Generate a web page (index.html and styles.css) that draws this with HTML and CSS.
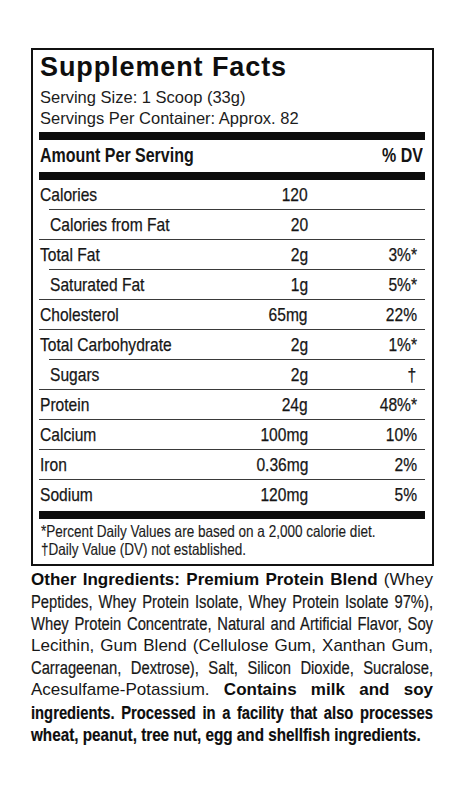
FILE: index.html
```html
<!DOCTYPE html>
<html lang="en">
<head>
<meta charset="utf-8">
<title>Supplement Facts</title>
<link rel="stylesheet" href="styles.css">
</head>
<body>
<div class="label">
  <section class="facts">
    <h1 class="title">Supplement Facts</h1>
    <p class="serving">Serving Size: 1 Scoop (33g)</p>
    <p class="serving">Servings Per Container: Approx. 82</p>
    <div class="bar"></div>
    <div class="head-row"><span class="cn left">Amount Per Serving</span><span class="cn right">% DV</span></div>
    <div class="bar"></div>
    <div class="rows">
      <div class="row first"><span class="name">Calories</span><span class="amt">120</span><span class="dv"></span></div>
      <div class="row sub"><span class="name">Calories from Fat</span><span class="amt">20</span><span class="dv"></span></div>
      <div class="row"><span class="name">Total Fat</span><span class="amt">2g</span><span class="dv">3%*</span></div>
      <div class="row sub"><span class="name">Saturated Fat</span><span class="amt">1g</span><span class="dv">5%*</span></div>
      <div class="row"><span class="name">Cholesterol</span><span class="amt">65mg</span><span class="dv">22%</span></div>
      <div class="row"><span class="name">Total Carbohydrate</span><span class="amt">2g</span><span class="dv">1%*</span></div>
      <div class="row sub"><span class="name">Sugars</span><span class="amt">2g</span><span class="dv dagger">†</span></div>
      <div class="row"><span class="name">Protein</span><span class="amt">24g</span><span class="dv">48%*</span></div>
      <div class="row"><span class="name">Calcium</span><span class="amt">100mg</span><span class="dv">10%</span></div>
      <div class="row"><span class="name">Iron</span><span class="amt">0.36mg</span><span class="dv">2%</span></div>
      <div class="row last"><span class="name">Sodium</span><span class="amt">120mg</span><span class="dv">5%</span></div>
    </div>
    <div class="bar"></div>
    <p class="note">
      <span class="nl">*Percent Daily Values are based on a 2,000 calorie diet.</span>
      <span class="nl">†Daily Value (DV) not established.</span>
    </p>
  </section>
  <p class="ingredients">
    <span class="ln wide"><b>Other Ingredients: Premium Protein Blend</b> (Whey</span>
    <span class="ln narrow">Peptides, Whey Protein Isolate, Whey Protein Isolate 97%),</span>
    <span class="ln narrow">Whey Protein Concentrate, Natural and Artificial Flavor, Soy</span>
    <span class="ln wide">Lecithin, Gum Blend (Cellulose Gum, Xanthan Gum,</span>
    <span class="ln narrow">Carrageenan, Dextrose), Salt, Silicon Dioxide, Sucralose,</span>
    <span class="ln wide">Acesulfame-Potassium. <b>Contains milk and soy</b></span>
    <span class="ln narrow"><b>ingredients. Processed in a facility that also processes</b></span>
    <span class="ln narrow end"><b>wheat, peanut, tree nut, egg and shellfish ingredients.</b></span>
  </p>
</div>
</body>
</html>
```

FILE: styles.css
```css
* {
  box-sizing: border-box;
}

html, body {
  margin: 0;
  padding: 0;
  background: #ffffff;
}

body {
  padding-top: 48px;
  color: #121212;
  font-family: "Liberation Sans", Arial, sans-serif;
  overflow: hidden;
}

.label {
  margin-left: 31px;
  width: 403px;
}

.facts {
  border: 2px solid #111111;
  padding: 2px 7px 6px 6px;
}

.title {
  margin: 0 0 4px 1px;
  font-weight: bold;
  font-size: 27px;
  line-height: 31px;
  letter-spacing: 0.9px;
  color: #0e0e0e;
}

.serving {
  margin: 0 0 0 1px;
  font-size: 16.5px;
  line-height: 20.5px;
  color: #1c1c1c;
}

.bar {
  height: 8px;
  background: #0c0c0c;
}

.serving + .serving + .bar {
  margin-top: 4px;
}

/* condensed type: Liberation Sans squeezed to Arial Narrow proportions */
.cn,
.name,
.amt,
.dv,
.nl {
  display: inline-block;
  transform: scaleX(0.82);
}

.left,
.name,
.nl {
  transform-origin: left center;
}

.right,
.amt,
.dv {
  transform-origin: right center;
}

.head-row {
  display: flex;
  justify-content: space-between;
  padding: 0 2px 1px 1px;
  font-weight: bold;
  font-size: 19.5px;
  line-height: 31px;
  color: #141414;
}

.rows {
  font-size: 19px;
  -webkit-text-stroke: 0.25px #161616;
}

.row {
  display: grid;
  grid-template-columns: 1fr auto 109px;
  padding: 0 8px 0 1px;
  height: 30px;
  line-height: 29px;
  border-top: 1px solid #3a3a3a;
  color: #161616;
}

.row.first {
  border-top: 0;
  height: 29px;
}

.row.sub {
  margin-left: 10px;
}

.row.last {
  height: 32px;
}

.amt,
.dv {
  text-align: right;
}

.dagger {
  padding-right: 1px;
}

.note {
  margin: 0;
  padding: 3px 0 0 2px;
  font-size: 16.5px;
  line-height: 18px;
  color: #1c1c1c;
  -webkit-text-stroke: 0.15px #1c1c1c;
}

.nl {
  display: block;
  white-space: nowrap;
}

.ingredients {
  margin: 3px 1px 0 0;
  line-height: 22.1px;
  color: #171717;
}

.ln {
  display: block;
  white-space: nowrap;
  text-align: justify;
  text-align-last: justify;
}

.ln.wide {
  font-size: 17px;
}

.ln.narrow {
  width: 121.95%;
  font-size: 18px;
  transform: scaleX(0.82);
  transform-origin: left center;
  -webkit-text-stroke: 0.2px #171717;
}

.ln.end {
  font-size: 18.6px;
  text-align-last: left;
}

b {
  font-weight: bold;
  color: #0d0d0d;
}
```
